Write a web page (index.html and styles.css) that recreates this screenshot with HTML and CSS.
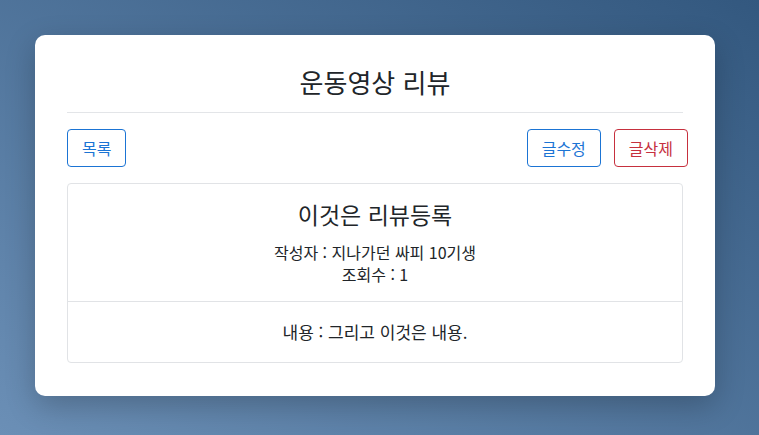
FILE: index.html
```html
<!DOCTYPE html>
<html lang="ko">
<head>
<meta charset="utf-8">
<title>운동영상 리뷰</title>
<link rel="stylesheet" href="styles.css">
</head>
<body>
<main class="panel">
  <h1 class="panel-title">운동영상 리뷰</h1>
  <hr class="divider">
  <div class="actions">
    <button class="btn btn-primary">목록</button>
    <div class="actions-right">
      <button class="btn btn-primary">글수정</button>
      <button class="btn btn-danger">글삭제</button>
    </div>
  </div>
  <section class="review">
    <div class="review-head">
      <h2 class="review-title">이것은 리뷰등록</h2>
      <p class="meta">작성자 : 지나가던 싸피 10기생</p>
      <p class="meta">조회수 : 1</p>
    </div>
    <div class="review-body">
      <p class="meta meta-wide">내용 : 그리고 이것은 내용.</p>
    </div>
  </section>
</main>
</body>
</html>
```

FILE: styles.css
```css
html, body {
  margin: 0;
  height: 100%;
}
body {
  font-family: "Noto Sans CJK KR", "Noto Sans", sans-serif;
  color: #212529;
  background: linear-gradient(to top right, #6b8fb6, #33587f);
  padding: 35px;
  box-sizing: border-box;
}
.panel {
  width: 680px;
  box-sizing: border-box;
  background: #fff;
  border-radius: 10px;
  padding: 32px 32px 33px;
  box-shadow: 0 10px 30px rgba(0, 0, 0, 0.22);
}
.panel-title {
  margin: 0;
  font-size: 26px;
  font-weight: 400;
  line-height: 29px;
  text-align: center;
}
.divider {
  border: 0;
  border-top: 1px solid #e3e5e8;
  margin: 16px 0;
}
.actions {
  display: flex;
  justify-content: space-between;
  margin-right: -5px;
  margin-bottom: 16px;
}
.actions-right {
  display: flex;
  gap: 13px;
}
.btn {
  font-family: inherit;
  font-size: 16px;
  line-height: 22px;
  height: 38px;
  padding: 7px 14px;
  box-sizing: border-box;
  background: #fff;
  border: 1px solid;
  border-radius: 4px;
}
.btn-primary {
  color: #1b74d4;
  border-color: #1b74d4;
}
.btn-danger {
  color: #c6303e;
  border-color: #c6303e;
}
.review {
  border: 1px solid #e1e3e6;
  border-radius: 4px;
  text-align: center;
}
.review-head {
  padding: 17px 16px 16px;
  border-bottom: 1px solid #e1e3e6;
}
.review-title {
  margin: 0 0 14px;
  font-size: 23px;
  font-weight: 400;
  line-height: 26px;
}
.meta {
  margin: 0;
  font-size: 16px;
  line-height: 22px;
}
.meta-wide {
  font-size: 17px;
}
.review-body {
  padding: 19px 16px 19px;
}
```
